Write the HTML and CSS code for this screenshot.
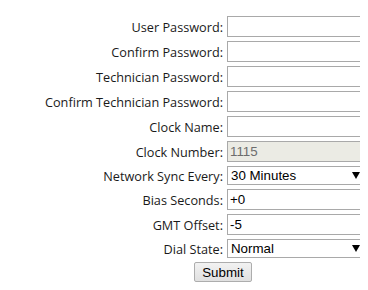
FILE: index.html
```html
<!DOCTYPE html>
<html lang="en">
<head>
    <meta charset="UTF-8">
    <meta name="viewport" content="width=device-width, initial-scale=1.0">
    <title>Clock Settings</title>
    <link rel="stylesheet" href="styles.css">
</head>
<body>
    <form id="clockForm">
        <table class="settings">
            <tr>
                <td class="label">User Password:</td>
                <td><input type="password" name="user-password"></td>
            </tr>
            <tr>
                <td class="label">Confirm Password:</td>
                <td><input type="password" name="confirm-password"></td>
            </tr>
            <tr>
                <td class="label">Technician Password:</td>
                <td><input type="password" name="tech-password"></td>
            </tr>
            <tr>
                <td class="label">Confirm Technician Password:</td>
                <td><input type="password" name="confirm-tech-password"></td>
            </tr>
            <tr>
                <td class="label">Clock Name:</td>
                <td><input type="text" name="clock-name"></td>
            </tr>
            <tr>
                <td class="label">Clock Number:</td>
                <td><input type="text" name="clock-number" value="1115" disabled></td>
            </tr>
            <tr>
                <td class="label">Network Sync Every:</td>
                <td>
                    <select name="sync-every">
                        <option>30 Minutes</option>
                        <option>1 Hour</option>
                        <option>24 Hours</option>
                    </select>
                </td>
            </tr>
            <tr>
                <td class="label">Bias Seconds:</td>
                <td><input type="text" name="bias-seconds" value="+0"></td>
            </tr>
            <tr>
                <td class="label">GMT Offset:</td>
                <td><input type="text" name="gmt-offset" value="-5"></td>
            </tr>
            <tr>
                <td class="label">Dial State:</td>
                <td>
                    <select name="dial-state">
                        <option>Normal</option>
                        <option>Reversed</option>
                    </select>
                </td>
            </tr>
            <tr>
                <td colspan="2" class="actions"><button type="submit">Submit</button></td>
            </tr>
        </table>
    </form>
</body>
</html>
```

FILE: styles.css
```css
html {
    overflow: hidden;
}

body {
    margin: 8px;
    background: #ffffff;
    font-family: "Open Sans", "Noto Sans", sans-serif;
    font-size: 12.7px;
    color: #1a1a1a;
}

form {
    width: 420px;
    margin: 5px 0 0 34px;
}

.settings {
    border-spacing: 2px;
}

.settings td {
    padding: 1px;
}

.settings td.label {
    width: 176px;
    text-align: right;
    white-space: nowrap;
}

.settings input,
.settings select {
    box-sizing: border-box;
    display: block;
    margin: 0;
    font-family: "Liberation Sans", Arial, sans-serif;
    font-size: 13.33px;
    color: #000000;
    background: #ffffff;
    border: 1px solid #a9a9a9;
    border-radius: 0;
}

.settings input {
    width: 174px;
    height: 21px;
    padding: 1px 2px;
}

.settings input:disabled {
    background: #ebebe4;
    color: #6d6d6d;
}

.settings select {
    width: 140px;
    height: 19px;
    padding: 0 0 0 3px;
    appearance: none;
    -webkit-appearance: none;
    background: #ffffff url("data:image/svg+xml,%3Csvg xmlns='http://www.w3.org/2000/svg' width='8' height='7'%3E%3Cpath d='M0 0h8L4 7z' fill='%23000'/%3E%3C/svg%3E") no-repeat right 6px center;
}

.settings td.actions {
    text-align: center;
}

.actions button {
    font-family: "Liberation Sans", Arial, sans-serif;
    font-size: 13.33px;
    color: #000000;
    width: 58px;
    height: 20px;
    padding: 0;
    border: 1px solid #adadad;
    border-radius: 2px;
    background: linear-gradient(#f2f2f2, #e0e0e0);
}
```
